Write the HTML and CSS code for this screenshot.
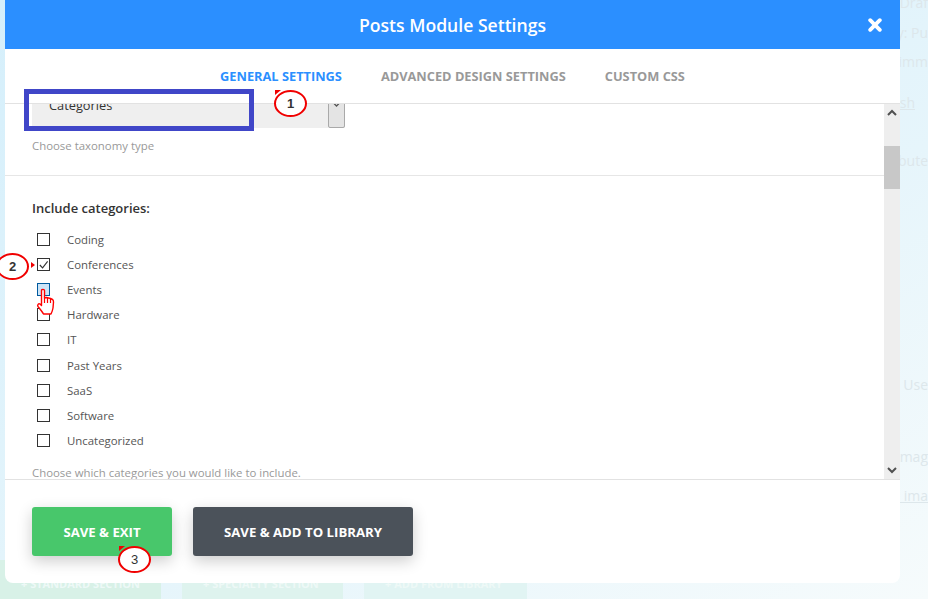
FILE: index.html
```html
<!DOCTYPE html>
<html lang="en">
<head>
    <meta charset="UTF-8">
    <meta name="viewport" content="width=device-width, initial-scale=1.0">
    <title>Posts Module Settings</title>
    <link rel="stylesheet" href="styles.css">
</head>
<body>
    <!-- Page behind the modal -->
    <div class="backdrop">
        <div class="side-notes">
            <p class="note-draft">Draf</p>
            <p class="note-public">y: Pu</p>
            <p class="note-immed">n imm</p>
            <p class="note-trash"><u>ash</u></p>
            <p class="note-attr">ibute</p>
            <p class="note-use">Use</p>
            <p class="note-image">Imag</p>
            <p class="note-set"><u>d ima</u></p>
        </div>
        <div class="section-bar">
            <span class="section-btn standard">+ STANDARD SECTION</span>
            <span class="section-btn specialty">+ SPECIALTY SECTION</span>
            <span class="section-btn from-library">+ ADD FROM LIBRARY</span>
        </div>
    </div>

    <div class="modal">
        <div class="modal-header">
            <h1>Posts Module Settings</h1>
            <svg class="close-icon" width="14" height="14" viewBox="0 0 14 14">
                <path d="M2.2 2.2 L11.8 11.8 M11.8 2.2 L2.2 11.8" stroke="#fff" stroke-width="3.8" stroke-linecap="round"/>
            </svg>
        </div>

        <div class="tabs">
            <span class="tab active">GENERAL SETTINGS</span>
            <span class="tab">ADVANCED DESIGN SETTINGS</span>
            <span class="tab">CUSTOM CSS</span>
        </div>

        <div class="settings">
            <div class="settings-body">
                <div class="select-box">
                    <span class="select-text">Categories</span>
                    <span class="select-arrow">
                        <svg width="15" height="40" viewBox="0 0 15 40"><path d="M5 16.5 L7.5 19 L10 16.5" fill="none" stroke="#555" stroke-width="1.3"/></svg>
                    </span>
                </div>
                <p class="help help-taxonomy">Choose taxonomy type</p>
                <hr class="divider">
                <h2>Include categories:</h2>
                <ul class="cat-list">
                    <li><span class="check"></span>Coding</li>
                    <li><span class="check">
                        <svg width="12" height="12" viewBox="0 0 12 12"><path d="M2 6 L5 9.2 L10.5 2" fill="none" stroke="#333" stroke-width="1.2"/></svg>
                    </span>Conferences</li>
                    <li><span class="check check-hover"></span>Events</li>
                    <li><span class="check"></span>Hardware</li>
                    <li><span class="check"></span>IT</li>
                    <li><span class="check"></span>Past Years</li>
                    <li><span class="check"></span>SaaS</li>
                    <li><span class="check"></span>Software</li>
                    <li><span class="check"></span>Uncategorized</li>
                </ul>
                <p class="help">Choose which categories you would like to include.</p>
            </div>
            <div class="scrollbar">
                <svg width="16" height="17" viewBox="0 0 16 17"><path d="M4 11 L8 7 L12 11" fill="none" stroke="#505050" stroke-width="2"/></svg>
                <div class="scroll-track"><div class="scroll-thumb"></div></div>
                <svg width="16" height="17" viewBox="0 0 16 17"><path d="M4 6 L8 10 L12 6" fill="none" stroke="#505050" stroke-width="2"/></svg>
            </div>
        </div>

        <div class="modal-footer">
            <button class="button save">SAVE &amp; EXIT</button>
            <button class="button library">SAVE &amp; ADD TO LIBRARY</button>
        </div>
    </div>

    <!-- Tutorial markup drawn on top of the screenshot -->
    <div class="mark-rect"></div>
    <div class="mark mark-1"><i class="corner"></i>1</div>
    <div class="mark mark-2">2</div>
    <i class="pointer"></i>
    <div class="mark mark-3"><i class="corner"></i>3</div>
    <svg class="hand" width="20" height="28" viewBox="0 0 20 28">
        <path d="M5.5 2.5 C5.5 1 8.5 1 8.5 2.5 L8.5 10 L10.5 9.5 L12.5 10 L14.5 10.5 L16.5 11.5 C17.5 12 17.5 13 17.5 14 L17 20 C16.5 23 15.5 25 15 26 L7.5 26 C6.5 24 4 21 2 18.5 C1 17 2.5 15 4 16 L5.5 17.5 Z" fill="#fff" stroke="#f00" stroke-width="1.4" stroke-linejoin="round"/>
        <path d="M8.5 10 L8.5 15 M11.5 10 L11.5 15 M14.5 11 L14.5 15" stroke="#f00" stroke-width="1.2" fill="none"/>
    </svg>
</body>
</html>
```

FILE: styles.css
```css
body {
    margin: 0;
    width: 928px;
    height: 599px;
    overflow: hidden;
    position: relative;
    font-family: "Open Sans", Arial, sans-serif;
    background: linear-gradient(150deg, #d5effb 0%, #e6f5fb 60%, #f6fbfc 100%);
}
.backdrop {
    height: 599px;
    display: flex;
    flex-direction: column;
    justify-content: space-between;
}
.side-notes {
    text-align: right;
    white-space: nowrap;
    font-size: 14px;
    color: #dde7eb;
}
.side-notes p {
    margin: 0;
    line-height: 20px;
}
.note-draft { margin-top: -7px !important; }
.note-public { margin-top: 10px !important; }
.note-immed { margin-top: 9px !important; }
.note-trash { margin-top: 21px !important; padding-right: 13px; }
.note-attr { margin-top: 38px !important; }
.note-use { margin-top: 204px !important; }
.note-image { margin-top: 52px !important; }
.note-set { margin-top: 19px !important; }
.section-bar {
    height: 39px;
    display: flex;
    gap: 21px;
    font-size: 11px;
    font-weight: 700;
    color: #eef9f7;
}
.section-btn {
    width: 161px;
    padding: 16px 0 0 21px;
    box-sizing: border-box;
    white-space: nowrap;
}
.section-btn.standard { background: #d8f1e7; }
.section-btn.specialty { background: #def3ee; }
.section-btn.from-library { width: 163px; background: #e1f4f3; }
.modal {
    position: absolute;
    top: 0;
    left: 5px;
    width: 895px;
    height: 583px;
    display: flex;
    flex-direction: column;
    background: white;
    border-radius: 0 0 8px 8px;
}
.modal-header {
    height: 49px;
    flex: none;
    display: flex;
    align-items: center;
    justify-content: center;
    position: relative;
    background: #2b8fff;
}
.modal-header h1 {
    margin: 0;
    font-size: 17.6px;
    font-weight: 600;
    color: white;
}
.close-icon {
    position: absolute;
    top: 18px;
    right: 18px;
}
.tabs {
    height: 55px;
    flex: none;
    display: flex;
    justify-content: center;
    align-items: center;
    gap: 39px;
    box-sizing: border-box;
    background: white;
    border-bottom: 1px solid #e2e2e2;
}
.tab {
    font-size: 12.8px;
    font-weight: 700;
    color: #999;
    white-space: nowrap;
}
.tab.active {
    color: #2b8fff;
}
.settings {
    flex: 1;
    display: flex;
    min-height: 0;
    overflow: hidden;
}
.settings-body {
    flex: 1;
    min-width: 0;
}
.select-box {
    height: 42px;
    width: 313px;
    margin: -18px 0 0 27px;
    box-sizing: border-box;
    padding: 10px 0 0 17px;
    position: relative;
    background: #efefef;
    font-size: 12.8px;
    color: #333;
}
.select-arrow {
    position: absolute;
    top: 0;
    right: 0;
    bottom: 0;
    width: 15px;
    border: 1px solid #a9a9a9;
    border-radius: 0 0 2px 2px;
    background: #e4e4e4;
}
.select-arrow svg {
    display: block;
}
.help {
    margin: 0;
    font-size: 11.4px;
    line-height: 16px;
    padding-left: 27px;
    color: #999;
}
.help-taxonomy {
    margin-top: 10px;
}
.divider {
    margin: 21px 0 0;
    border: none;
    border-top: 1px solid #e6e6e6;
}
h2 {
    margin: 23px 0 0 27px;
    font-size: 13px;
    line-height: 18px;
    font-weight: 600;
    color: #333;
}
.cat-list {
    list-style: none;
    margin: 10px 0 12px;
    padding: 0 0 0 32px;
}
.cat-list li {
    height: 25.1px;
    display: flex;
    align-items: center;
    font-size: 11.4px;
    color: #555;
}
.check {
    width: 11px;
    height: 11px;
    margin-right: 17px;
    flex: none;
    display: flex;
    align-items: center;
    justify-content: center;
    border: 1px solid #333;
    background: white;
}
.check-hover {
    border-color: #005a9e;
    background: #cce4f7;
}
.scrollbar {
    width: 16px;
    flex: none;
    display: flex;
    flex-direction: column;
    background: #eee;
}
.scrollbar svg {
    flex: none;
    display: block;
}
.scroll-track {
    flex: 1;
    padding-top: 25px;
}
.scroll-thumb {
    height: 43px;
    background: #c8c8c8;
}
.modal-footer {
    height: 104px;
    flex: none;
    display: flex;
    gap: 21px;
    box-sizing: border-box;
    padding: 27px 0 0 27px;
    border-top: 1px solid #e2e2e2;
}
.button {
    height: 49px;
    border: none;
    border-radius: 3px;
    font-family: inherit;
    font-size: 13.2px;
    font-weight: 700;
    color: white;
    box-shadow: 0 5px 15px rgba(0, 0, 0, 0.2);
}
.button.save {
    width: 140px;
    background: #48c76b;
}
.button.library {
    width: 220px;
    background: #4b525a;
}
.mark-rect {
    position: absolute;
    left: 24px;
    top: 89px;
    width: 230px;
    height: 42px;
    box-sizing: border-box;
    border: 5px solid #4046c8;
}
.mark {
    position: absolute;
    box-sizing: border-box;
    width: 33px;
    height: 27px;
    border: 2px solid #f00000;
    border-radius: 50%;
    background: white;
    display: flex;
    align-items: center;
    justify-content: center;
    font-family: "Liberation Sans", Arial, sans-serif;
    font-size: 13px;
    font-weight: 700;
    color: #333;
}
.mark-1 { left: 274px; top: 90px; }
.mark-2 { left: -4px; top: 253px; }
.mark-3 { left: 118px; top: 546px; font-weight: 400; }
.corner {
    position: absolute;
    left: -1px;
    top: -2px;
    width: 0;
    height: 0;
    border-top: 5px solid #f00000;
    border-right: 6px solid transparent;
}
.pointer {
    position: absolute;
    left: 31px;
    top: 262px;
    width: 0;
    height: 0;
    border-left: 4px solid #f00000;
    border-top: 3px solid transparent;
    border-bottom: 3px solid transparent;
}
.hand {
    position: absolute;
    left: 36px;
    top: 288px;
}
```
